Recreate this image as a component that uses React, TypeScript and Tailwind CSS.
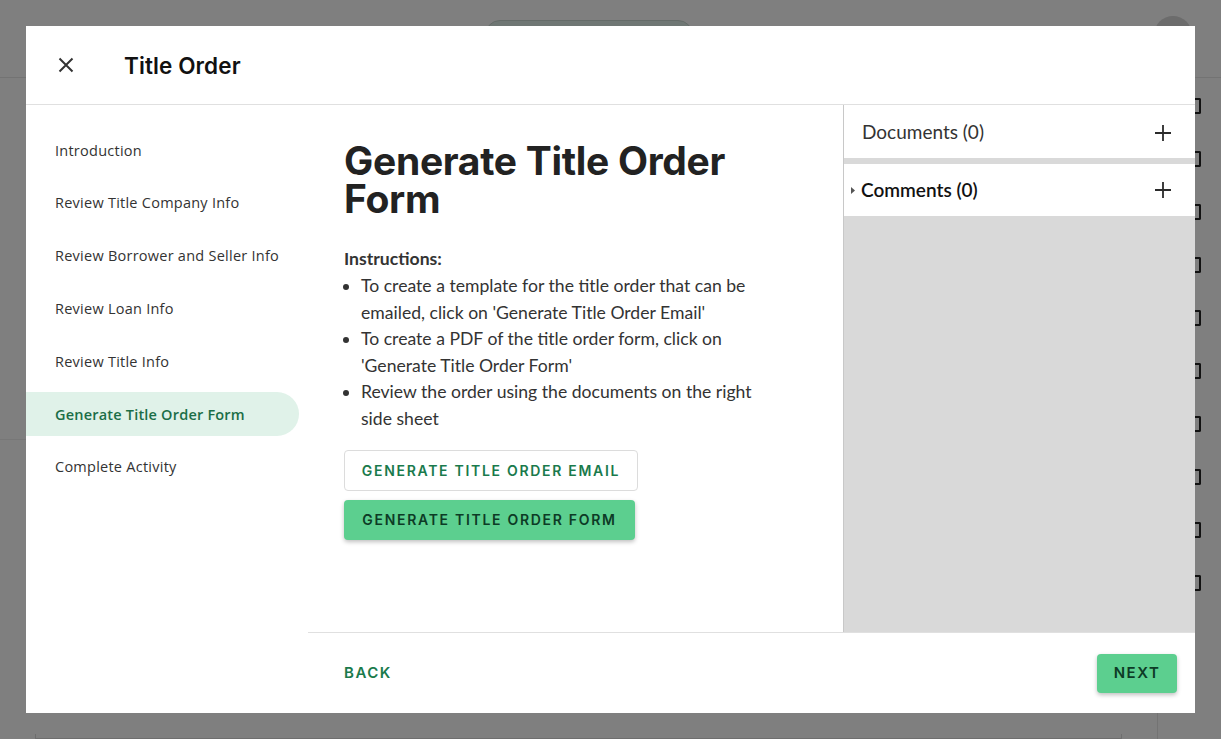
import React from "react";

const heading = { fontFamily: "Inter, 'Liberation Sans', sans-serif" };

function PlusIcon() {
  return (
    <svg width="18" height="18" viewBox="0 0 18 18" fill="none">
      <path d="M9 1v16M1 9h16" stroke="#2b2b2b" strokeWidth="1.8" />
    </svg>
  );
}

const steps = [
  "Introduction",
  "Review Title Company Info",
  "Review Borrower and Seller Info",
  "Review Loan Info",
  "Review Title Info",
  "Generate Title Order Form",
  "Complete Activity",
];

export default function App() {
  return (
    <div className="relative w-[1221px] h-[739px] overflow-hidden bg-white font-['Open_Sans',sans-serif]">
      {/* backdrop page */}
      <div className="flex flex-col h-full">
        <div className="h-[78px] border-b border-[#e6e6e6] flex items-start pl-[485px] relative">
          <div className="mt-[20px] w-[208px] h-[30px] rounded-full border border-[#c8d6d0] bg-[#dfeee8]" />
          <div className="absolute right-[29px] top-[16px] w-[38px] h-[38px] rounded-full bg-[#d8d8d8]" />
        </div>
        <div className="flex flex-1">
          <div className="flex-1 flex flex-col">
            <div className="h-[362px] border-b border-[#eeeeee]" />
            <div className="flex-1" />
            <div className="mx-[35px] h-[5px] border border-[#dddddd] border-t-0" />
          </div>
          <div className="w-[64px] border-l border-[#e6e6e6] flex flex-col items-start pt-[20px] gap-[37px] pl-[36px]">
            {Array.from({ length: 10 }).map((_, i) => (
              <div key={i} className="w-[7px] h-[16px] border-2 border-l-0 border-[#222] rounded-r-[2px]" />
            ))}
          </div>
        </div>
      </div>
      <div className="absolute inset-0 bg-black/50" />

      {/* modal */}
      <div className="absolute left-[26px] top-[26px] w-[1169px] h-[687px] bg-white flex flex-col">
        <div className="h-[79px] border-b border-[#e0e0e0] flex items-center shrink-0">
          <div className="w-[98px] flex items-center pl-[32px]">
            <svg width="16" height="16" viewBox="0 0 16 16">
              <path d="M1.5 1.5l13 13M14.5 1.5l-13 13" stroke="#333" strokeWidth="2" />
            </svg>
          </div>
          <div style={heading} className="text-[22.5px] font-semibold text-[#111] tracking-[0.1px] pt-[2px]">
            Title Order
          </div>
        </div>
        <div className="flex flex-1 min-h-0">
          {/* sidebar */}
          <div className="w-[282px] shrink-0 pt-[23.5px] flex flex-col gap-[8.8px]">
            {steps.map((s) => {
              const active = s === "Generate Title Order Form";
              return (
                <div
                  key={s}
                  className={
                    active
                      ? "h-[44px] w-[273px] flex items-center pl-[29px] rounded-r-full bg-[#e0f2e9] text-[#1b6e47] text-[14.5px] font-semibold tracking-[0.2px]"
                      : "h-[44px] w-[273px] flex items-center pl-[29px] text-[#333] text-[14.5px] tracking-[0.25px]"
                  }
                >
                  {s}
                </div>
              );
            })}
          </div>
          <div className="flex-1 flex flex-col min-w-0">
            <div className="flex flex-1 min-h-0">
              {/* main */}
              <div className="w-[535px] shrink-0 pl-[36px] pt-[37px]">
                <h1 style={heading} className="w-[420px] text-[39px] leading-[38px] font-bold text-[#222] tracking-[-0.3px]">
                  Generate Title Order Form
                </h1>
                <div className="mt-[28px] w-[426px] font-['Lato',sans-serif] text-[17.6px] text-[#333]">
                  <div className="font-bold leading-[26px]">Instructions:</div>
                  <ul className="list-disc pl-[17px] leading-[26.6px] pt-[1px]">
                    <li>To create a template for the title order that can be emailed, click on 'Generate Title Order Email'</li>
                    <li>To create a PDF of the title order form, click on 'Generate Title Order Form'</li>
                    <li>Review the order using the documents on the right side sheet</li>
                  </ul>
                </div>
                <div className="mt-[17px] flex flex-col items-start gap-[9px]">
                  <button style={heading} className="h-[41px] w-[294px] border border-[#dcdcdc] rounded-[4px] bg-white text-[#1a7a4c] text-[14px] font-semibold tracking-[1.7px]">
                    GENERATE TITLE ORDER EMAIL
                  </button>
                  <button style={heading} className="h-[40px] w-[291px] rounded-[4px] bg-[#5ccf8f] text-[#0d3b26] text-[14px] font-semibold tracking-[1.7px] shadow-[0_2px_4px_rgba(0,0,0,0.25)]">
                    GENERATE TITLE ORDER FORM
                  </button>
                </div>
              </div>
              {/* right panel */}
              <div className="flex-1 border-l border-[#c8c8c8] bg-[#d9d9d9] flex flex-col gap-[6px]">
                <div className="h-[53px] bg-white flex items-center justify-between pl-[18px] pr-[23px] pt-[2px] text-[19px] text-[#333] font-['Lato',sans-serif]">
                  <span>Documents (0)</span>
                  <PlusIcon />
                </div>
                <div className="h-[52px] bg-white flex items-center justify-between pl-[7px] pr-[23px] text-[19px] text-[#111] font-['Lato',sans-serif] font-semibold">
                  <span className="flex items-center gap-[6px]">
                    <svg width="4" height="7" viewBox="0 0 4 7">
                      <path d="M0 0l4 3.5L0 7z" fill="#555" />
                    </svg>
                    Comments (0)
                  </span>
                  <PlusIcon />
                </div>
              </div>
            </div>
            {/* footer */}
            <div className="h-[81px] shrink-0 border-t border-[#e0e0e0] flex items-center justify-between pl-[36px] pr-[18px]">
              <button style={heading} className="text-[15px] font-semibold tracking-[1.5px] text-[#1a7a4c]">
                BACK
              </button>
              <button style={heading} className="h-[39px] w-[80px] rounded-[4px] bg-[#5ccf8f] text-[#0d3b26] text-[15px] font-semibold tracking-[1.5px] shadow-[0_2px_4px_rgba(0,0,0,0.25)]">
                NEXT
              </button>
            </div>
          </div>
        </div>
      </div>
    </div>
  );
}
